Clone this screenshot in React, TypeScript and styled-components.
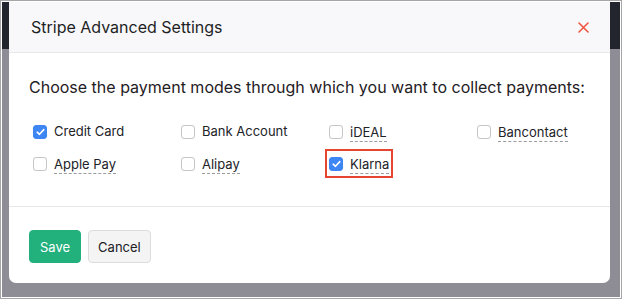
import * as React from "react";
import styled, { createGlobalStyle } from "styled-components";

const GlobalStyle = createGlobalStyle`
  body {
    margin: 0;
    font-family: "Inter", "Noto Sans", sans-serif;
    color: #1f2024;
  }
`;

const Frame = styled.div`
  width: 622px;
  height: 299px;
  box-sizing: border-box;
  border: 1px solid #a6a6a8;
  padding: 1px;
  background: #ffffff;
`;

const Page = styled.div`
  position: relative;
  height: 100%;
  background: #8e8d95;
  overflow: hidden;
`;

const TopBar = styled.div`
  height: 47px;
  background: #22252e;
`;

const Overlay = styled.div`
  position: absolute;
  inset: 0;
  padding: 0 10px 0 7px;
`;

const Modal = styled.div`
  height: 281px;
  background: #ffffff;
  border-radius: 0 0 7px 7px;
  display: flex;
  flex-direction: column;
  overflow: hidden;
`;

const Header = styled.div`
  height: 50px;
  flex-shrink: 0;
  background: #f8f8fb;
  border-bottom: 1px solid #e7e7ec;
  display: flex;
  align-items: center;
  justify-content: space-between;
  padding: 0 21px 0 22px;
`;

const Title = styled.h2`
  margin: 0;
  font-size: 16px;
  font-weight: 400;
  color: #1e1f24;
`;

const CloseButton = styled.button`
  border: 0;
  padding: 0;
  background: none;
  width: 11px;
  height: 11px;
  display: flex;
  cursor: pointer;
`;

const Body = styled.div`
  flex: 1;
  padding: 22px 20px 0;
  border-bottom: 1px solid #e7e7ec;
`;

const Intro = styled.p`
  margin: 0;
  font-size: 16px;
  line-height: 24px;
  color: #1f2024;
`;

const ModeGrid = styled.div`
  display: grid;
  grid-template-columns: repeat(4, 148px);
  row-gap: 11px;
  margin-top: 22px;
  padding-left: 4px;
`;

const Mode = styled.label<{ $highlight?: boolean }>`
  justify-self: start;
  display: inline-flex;
  align-items: center;
  gap: 7px;
  height: 21px;
  cursor: pointer;
  outline: ${(p) => (p.$highlight ? "2px solid #e6452f" : "none")};
  outline-offset: 2px;
`;

const Box = styled.span<{ $checked: boolean }>`
  width: 14px;
  height: 14px;
  box-sizing: border-box;
  border-radius: 3px;
  border: 1px solid ${(p) => (p.$checked ? "#3f86f5" : "#c5c5ca")};
  background: ${(p) => (p.$checked ? "#3f86f5" : "#ffffff")};
  display: flex;
  align-items: center;
  justify-content: center;
  flex-shrink: 0;
`;

const ModeName = styled.span<{ $dashed?: boolean }>`
  font-size: 13px;
  line-height: 17px;
  color: #222328;
  padding-top: ${(p) => (p.$dashed ? "2px" : "0")};
  border-bottom: 1px dashed
    ${(p) => (p.$dashed ? "#9a9a9f" : "transparent")};
`;

const Footer = styled.div`
  height: 76px;
  flex-shrink: 0;
  box-sizing: border-box;
  padding: 23px 0 0 20px;
  display: flex;
  align-items: flex-start;
  gap: 7px;
`;

const Button = styled.button<{ $primary?: boolean }>`
  height: 33px;
  box-sizing: border-box;
  padding: 0 ${(p) => (p.$primary ? "10px" : "9px")};
  font-family: "Inter", "Noto Sans", sans-serif;
  font-size: 13px;
  border-radius: 4px;
  cursor: pointer;
  color: ${(p) => (p.$primary ? "#ffffff" : "#202124")};
  background: ${(p) => (p.$primary ? "#22b07d" : "#f4f4f5")};
  border: 1px solid ${(p) => (p.$primary ? "#22b07d" : "#dcdcdf")};
`;

type PaymentMode = {
  name: string;
  checked: boolean;
  dashed: boolean;
  highlight?: boolean;
};

const modes: PaymentMode[] = [
  { name: "Credit Card", checked: true, dashed: false },
  { name: "Bank Account", checked: false, dashed: false },
  { name: "iDEAL", checked: false, dashed: true },
  { name: "Bancontact", checked: false, dashed: true },
  { name: "Apple Pay", checked: false, dashed: true },
  { name: "Alipay", checked: false, dashed: true },
  { name: "Klarna", checked: true, dashed: true, highlight: true },
];

function Check() {
  return (
    <svg width="9" height="8" viewBox="0 0 9 8" fill="none">
      <path
        d="M1.2 4.2 L3.5 6.3 L7.8 1.6"
        stroke="#ffffff"
        strokeWidth="1.6"
        strokeLinecap="round"
        strokeLinejoin="round"
      />
    </svg>
  );
}

export default function App() {
  return (
    <>
      <GlobalStyle />
      <Frame>
        <Page>
          <TopBar />
          <Overlay>
            <Modal>
              <Header>
                <Title>Stripe Advanced Settings</Title>
                <CloseButton aria-label="Close">
                  <svg width="11" height="11" viewBox="0 0 11 11">
                    <path
                      d="M1 1 L10 10 M10 1 L1 10"
                      stroke="#f0513c"
                      strokeWidth="1.5"
                      strokeLinecap="round"
                    />
                  </svg>
                </CloseButton>
              </Header>
              <Body>
                <Intro>
                  Choose the payment modes through which you want to collect
                  payments:
                </Intro>
                <ModeGrid>
                  {modes.map((m) => (
                    <Mode key={m.name} $highlight={m.highlight}>
                      <Box $checked={m.checked}>{m.checked && <Check />}</Box>
                      <ModeName $dashed={m.dashed}>{m.name}</ModeName>
                    </Mode>
                  ))}
                </ModeGrid>
              </Body>
              <Footer>
                <Button $primary>Save</Button>
                <Button>Cancel</Button>
              </Footer>
            </Modal>
          </Overlay>
        </Page>
      </Frame>
    </>
  );
}
